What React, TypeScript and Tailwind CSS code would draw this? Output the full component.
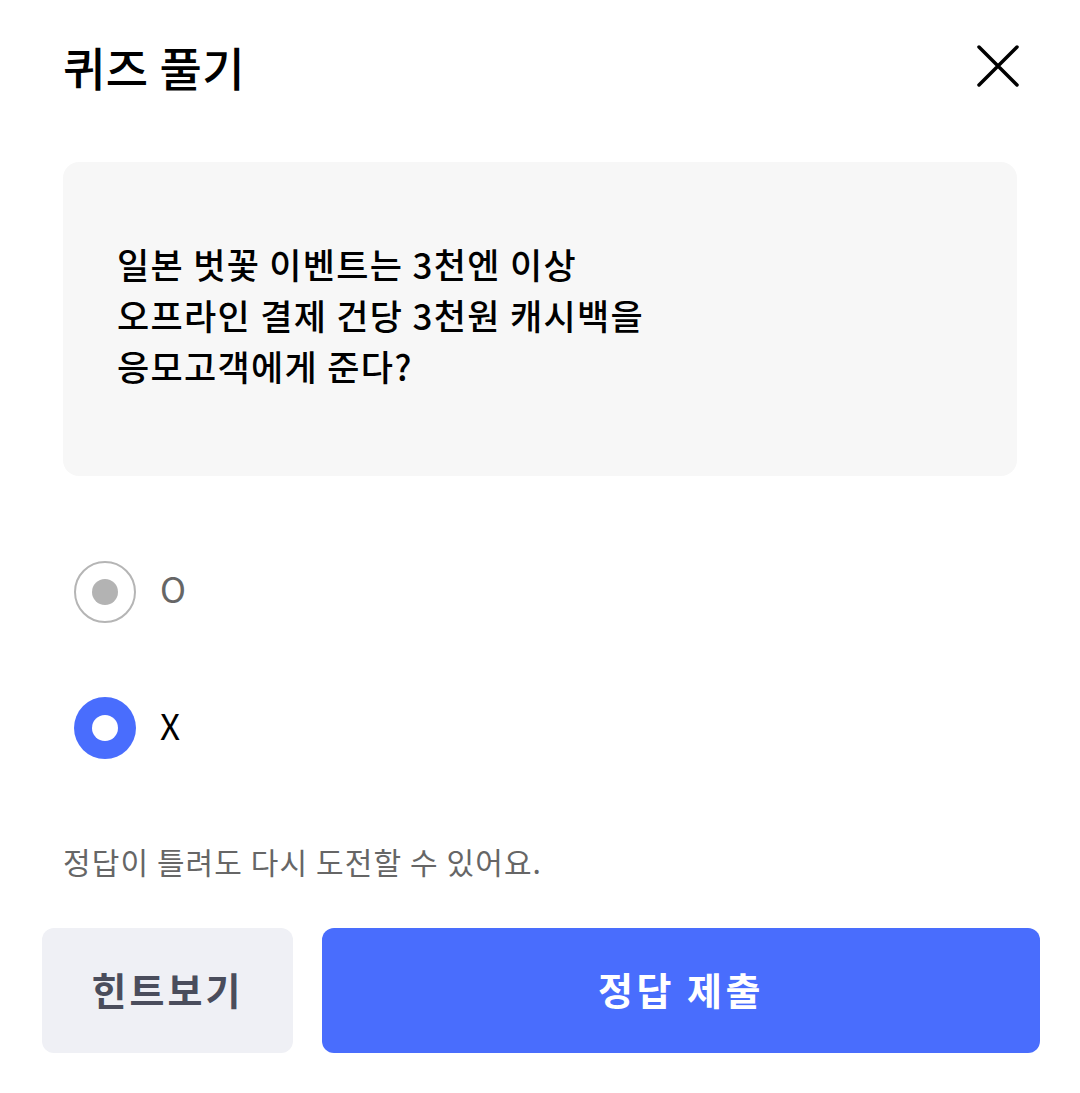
import React from "react";

const font = { fontFamily: '"Noto Sans CJK KR", "Noto Sans", sans-serif' };

export default function App() {
  return (
    <div className="w-[1080px] h-[1093px] bg-white" style={font}>
      <div className="px-[63px]">
        <div className="h-[132px] flex items-center justify-between">
          <h1 className="text-[46px] font-medium text-black leading-none tracking-[0.5px]">퀴즈 풀기</h1>
          <svg width="42" height="42" viewBox="0 0 42 42" className="mr-[-2px]">
            <path d="M2 2 L40 40 M40 2 L2 40" stroke="#000" strokeWidth="3.5" strokeLinecap="round" />
          </svg>
        </div>
        <div className="mt-[30px] h-[314px] rounded-[16px] bg-[#f7f7f7] flex items-center pl-[54px] pb-[10px]">
          <p className="text-[35px] leading-[51px] font-medium text-black tracking-[1.3px]">
            일본 벗꽃 이벤트는 3천엔 이상
            <br />
            오프라인 결제 건당 3천원 캐시백을
            <br />
            응모고객에게 준다?
          </p>
        </div>
        <div className="mt-[85px] flex flex-col gap-[74px] pl-[11px]">
          <div className="flex items-center h-[62px] gap-[24px]">
            <div className="w-[62px] h-[62px] rounded-full border-2 border-[#b5b5b5] flex items-center justify-center">
              <div className="w-[26px] h-[26px] rounded-full bg-[#b3b3b3]" />
            </div>
            <span className="text-[35px] text-[#666666] leading-none -mt-[10px]">O</span>
          </div>
          <div className="flex items-center h-[62px] gap-[24px]">
            <div className="w-[62px] h-[62px] rounded-full bg-[#496dfd] flex items-center justify-center">
              <div className="w-[26px] h-[26px] rounded-full bg-white" />
            </div>
            <span className="text-[35px] text-black leading-none -mt-[8px]">X</span>
          </div>
        </div>
        <p className="mt-[82px] text-[30px] leading-[40px] text-[#666666] tracking-[1.1px]">
          정답이 틀려도 다시 도전할 수 있어요.
        </p>
      </div>
      <div className="mt-[47px] px-[42px] flex gap-[29px]">
        <button className="w-[251px] h-[125px] rounded-[12px] bg-[#eff0f5] text-[38px] font-bold text-[#4a4d5c] tracking-[3px] flex items-center justify-center pb-[4px]">
          힌트보기
        </button>
        <button className="flex-1 mr-[-2px] h-[125px] rounded-[12px] bg-[#496dfd] text-[38px] font-bold text-white tracking-[3.5px] flex items-center justify-center pb-[4px]">
          정답 제출
        </button>
      </div>
    </div>
  );
}
